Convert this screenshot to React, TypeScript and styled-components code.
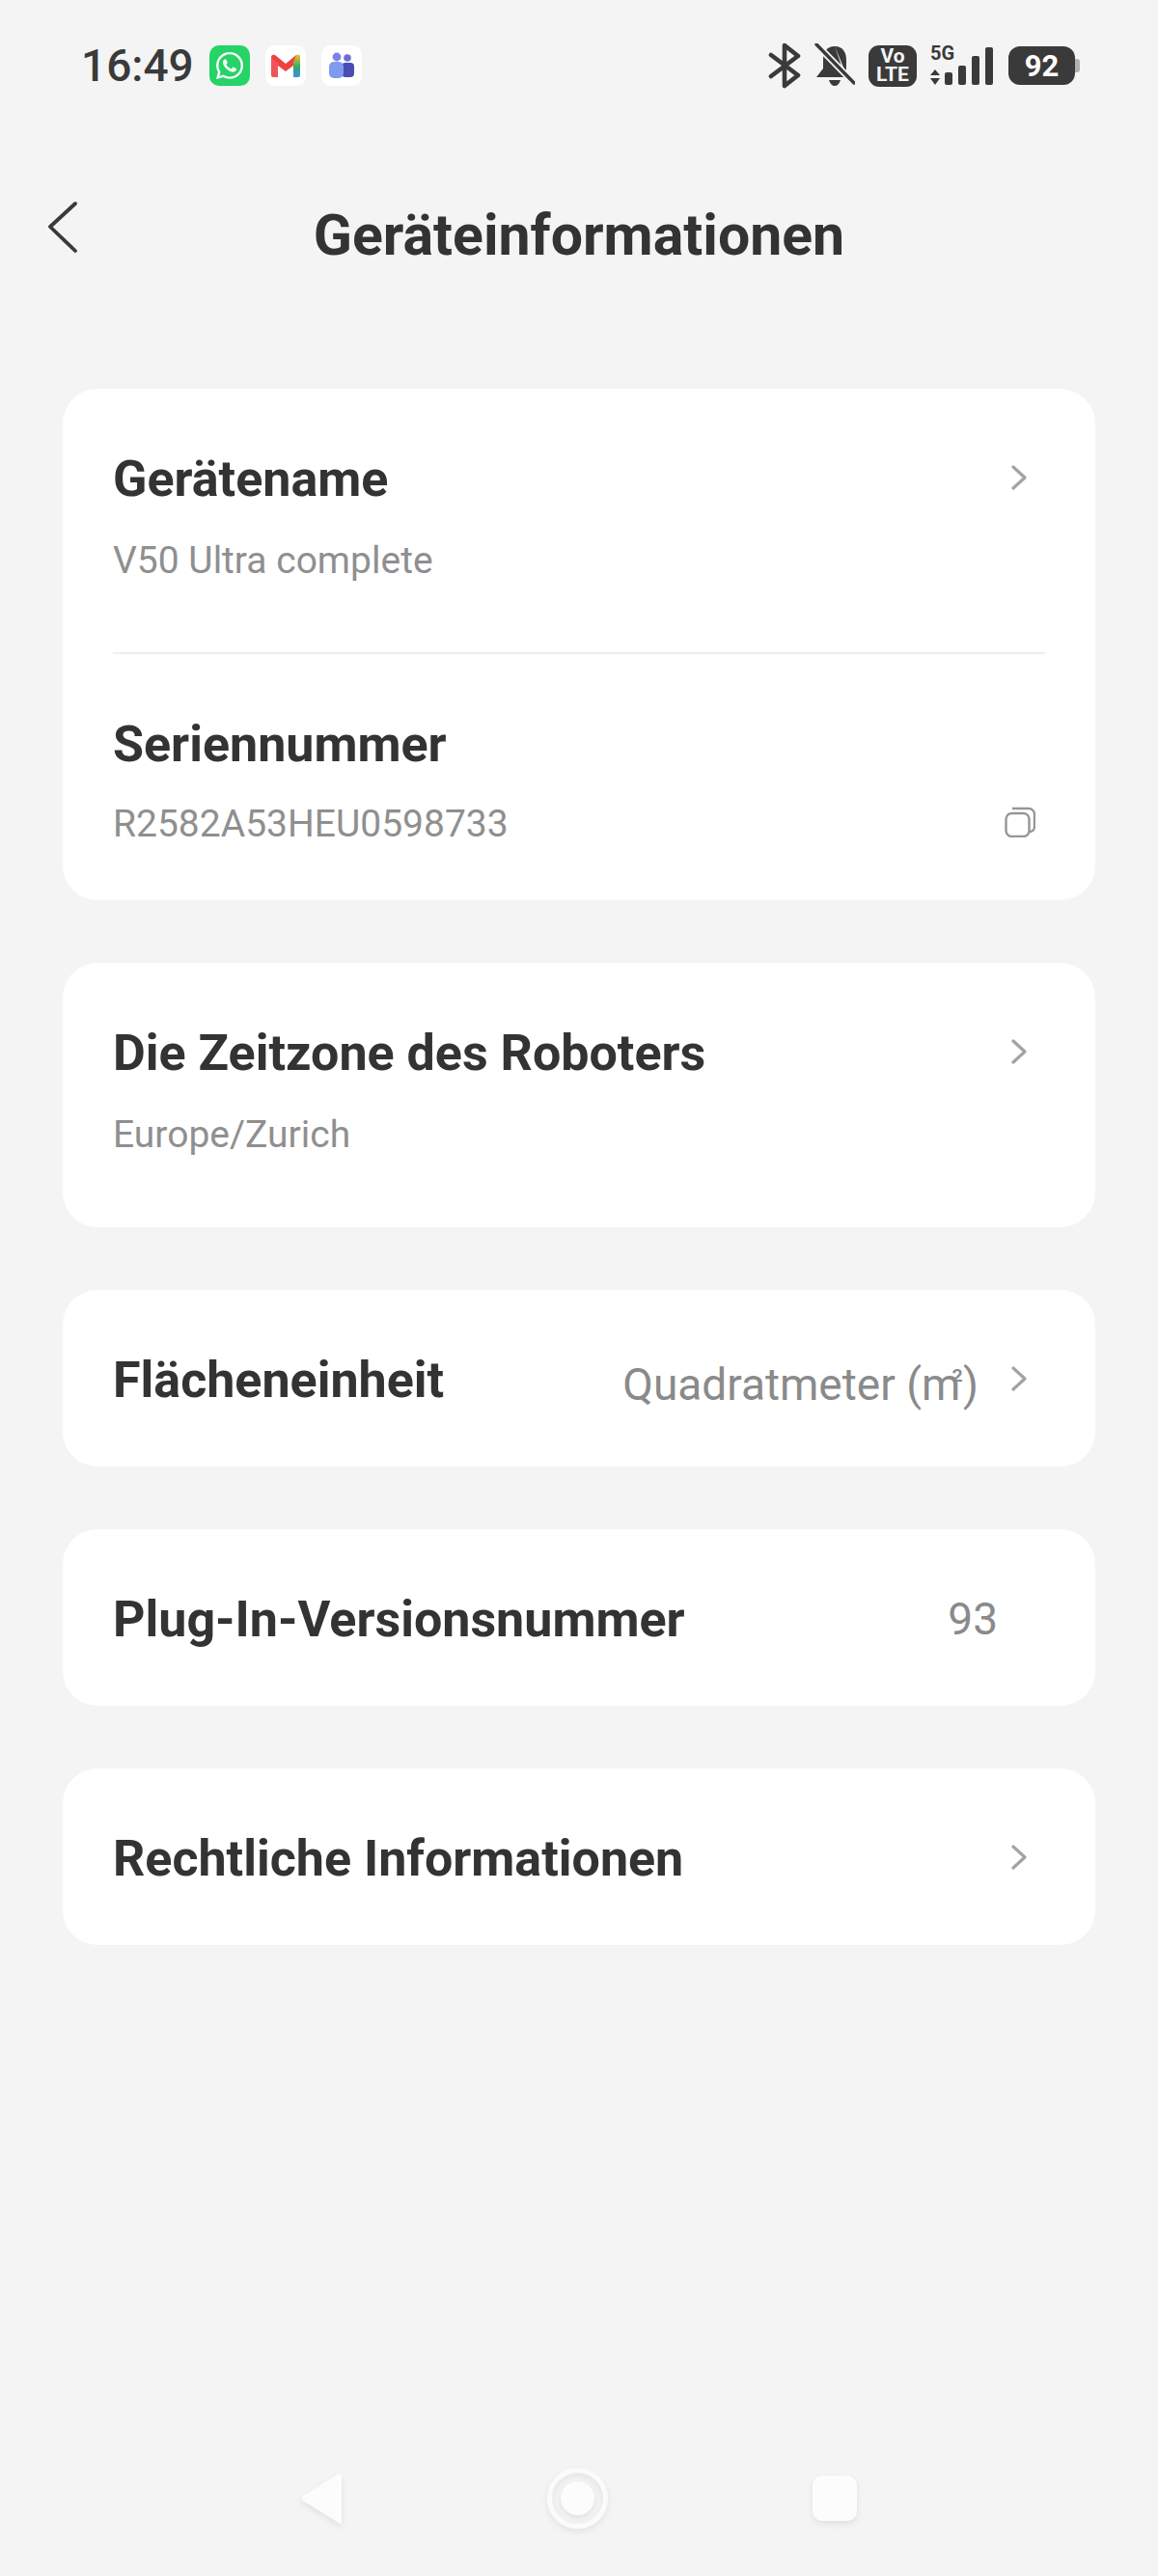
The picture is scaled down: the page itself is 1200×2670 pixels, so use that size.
import React from "react";
import styled, { createGlobalStyle } from "styled-components";
import { FaWhatsapp } from "react-icons/fa";

const Global = createGlobalStyle`
  html, body { margin: 0; padding: 0; background: #f4f4f4; }
  * { box-sizing: border-box; }
`;

const Page = styled.div`
  width: 1200px;
  height: 2670px;
  background: #f4f4f4;
  font-family: Roboto, "Liberation Sans", sans-serif;
  display: flex;
  flex-direction: column;
  overflow: hidden;
`;

const StatusBar = styled.div`
  height: 68px;
  margin-top: 34px;
  padding: 0 86px 0 84px;
  display: flex;
  align-items: center;
  justify-content: space-between;
`;

const StatusGroup = styled.div<{ $gap: number }>`
  display: flex;
  align-items: center;
  gap: ${(p) => p.$gap}px;
`;

const Clock = styled.span`
  font-size: 46px;
  font-weight: 500;
  color: #3a3a3a;
`;

const AppBadge = styled.span<{ $bg: string }>`
  width: 42px;
  height: 42px;
  border-radius: 10px;
  background: ${(p) => p.$bg};
  display: flex;
  align-items: center;
  justify-content: center;
  color: #fff;
`;

const Header = styled.div`
  height: 120px;
  margin-top: 81px;
  position: relative;
  display: flex;
  align-items: center;
  justify-content: center;
`;

const BackButton = styled.span`
  position: absolute;
  left: 49px;
  top: 25px;
  display: flex;
`;

const Title = styled.h1`
  margin: 0;
  font-size: 59px;
  font-weight: 700;
  color: #333;
`;

const Cards = styled.div`
  margin-top: 100px;
  padding: 0 65px;
  display: flex;
  flex-direction: column;
  gap: 65px;
`;

const Card = styled.section`
  background: #fff;
  border-radius: 36px;
  padding: 0 52px;
`;

const StackRow = styled.div<{ $height: number; $divided?: boolean }>`
  height: ${(p) => p.$height}px;
  display: flex;
  flex-direction: column;
  border-bottom: ${(p) => (p.$divided ? "2px solid #eeeeee" : "none")};
  padding-top: 63px;
`;

const LineRow = styled.div`
  height: 183px;
  padding-top: 3px;
  display: flex;
  align-items: center;
  justify-content: space-between;
`;

const TopLine = styled.div`
  display: flex;
  align-items: center;
  justify-content: space-between;
  height: 60px;
`;

const Label = styled.span`
  font-size: 52px;
  font-weight: 700;
  color: #333;
`;

const Sub = styled.span`
  font-size: 39px;
  color: #8f8f8f;
`;

const SubLine = styled.div<{ $gap: number }>`
  margin-top: ${(p) => p.$gap}px;
  display: flex;
  align-items: center;
  justify-content: space-between;
`;

const Value = styled.span`
  font-size: 46px;
  color: #8a8a8a;
`;

const Lowered = styled(Value)`
  position: relative;
  top: 5px;
  margin-right: 34px;
`;

const Squared = styled.span`
  font-size: 32px;
  position: relative;
  top: -9px;
  margin-left: -9px;
`;

const ValueGroup = styled.div`
  display: flex;
  align-items: center;
`;

const NumberValue = styled(Value)`
  margin-right: 49px;
`;

const ChevronSlot = styled.span`
  display: flex;
  margin-right: 19px;
  margin-bottom: 2px;
`;

const CopySlot = styled.span`
  display: flex;
  margin-right: 10px;
  margin-bottom: 5px;
`;

const NavBar = styled.div`
  margin-top: auto;
  height: 63px;
  margin-bottom: 49px;
  padding: 0 312px;
  display: flex;
  align-items: center;
  justify-content: space-between;
`;

const Chevron = () => (
  <ChevronSlot>
    <svg width="16" height="26" viewBox="0 0 16 26" fill="none" stroke="#a3a3a3" strokeWidth="3.2" strokeLinecap="round" strokeLinejoin="round">
      <path d="M2 2 L14 13 L2 24" />
    </svg>
  </ChevronSlot>
);

const CopyIcon = () => (
  <CopySlot>
    <svg width="32" height="32" viewBox="0 0 32 32" fill="none" stroke="#969696" strokeWidth="2.4">
      <rect x="1.5" y="7" width="24" height="24" rx="6" />
      <path d="M8 2 H25 A6 6 0 0 1 31 8 V21 A5 5 0 0 1 26 26" />
    </svg>
  </CopySlot>
);

const GmailIcon = () => (
  <svg width="32" height="26" viewBox="0 0 32 26">
    <defs>
      <linearGradient id="gmailRight" x1="0" y1="1" x2="0" y2="0">
        <stop offset="0" stopColor="#3f8ee8" />
        <stop offset="0.45" stopColor="#35a86a" />
        <stop offset="1" stopColor="#f5c51f" />
      </linearGradient>
    </defs>
    <path d="M1 5 Q1 1 5 2 L16 11 L27 2 Q31 1 31 5 L24 13 L16 19 L8 13Z" fill="#f0413f" />
    <path d="M1 5 L8 10 V25 H3 Q1 25 1 23Z" fill="#f1545c" />
    <path d="M31 4 V23 Q31 25 29 25 H24 V10 L27 2 Q31 1 31 4Z" fill="url(#gmailRight)" />
  </svg>
);

const TeamsIcon = () => (
  <svg width="28" height="28" viewBox="0 0 28 28">
    <circle cx="9" cy="5" r="4.4" fill="#7b83eb" />
    <circle cx="20" cy="6" r="3.8" fill="#6a6fd6" />
    <rect x="14" y="11" width="13" height="15" rx="4" fill="#4a4db5" />
    <rect x="1" y="10" width="15" height="17" rx="5" fill="#7f9bf0" />
  </svg>
);

const Bluetooth = () => (
  <svg width="34" height="48" viewBox="0 0 34 48" fill="none" stroke="#3a3a3a" strokeWidth="4.6" strokeLinejoin="round" strokeLinecap="round">
    <path d="M3 13 L31 34 L17 45 V3 L31 14 L3 35" />
  </svg>
);

const BellOff = () => (
  <svg width="42" height="46" viewBox="0 0 42 46">
    <path d="M21 3 C12 3 9 10 9 17 V26 L2 35 H32Z M33 32 V17 C33 10 30 3 21 3Z" fill="#3a3a3a" />
    <path d="M15 38 H27 Q25 44 21 44 Q17 44 15 38Z" fill="#3a3a3a" />
    <path d="M2 1 L41 41" stroke="#f4f4f4" strokeWidth="7" />
    <path d="M2 1 L41 41" stroke="#3a3a3a" strokeWidth="3.4" strokeLinecap="round" />
  </svg>
);

const VoLteBox = styled.span`
  width: 50px;
  height: 43px;
  border-radius: 11px;
  background: #3a3a3a;
  color: #f4f4f4;
  font-size: 21px;
  font-weight: 700;
  line-height: 19px;
  text-align: center;
  display: flex;
  flex-direction: column;
  justify-content: center;
`;

const SignalWrap = styled.span`
  position: relative;
  display: flex;
  width: 67px;
  height: 42px;
`;

const FiveG = styled.span`
  position: absolute;
  left: 0;
  top: -3px;
  font-size: 20px;
  font-weight: 700;
  line-height: 22px;
  color: #3a3a3a;
`;

const Signal = () => (
  <svg width="66" height="42" viewBox="0 0 66 42" fill="#3a3a3a">
    <path d="M0 31 L5 25 L10 31Z M0 34 H10 L5 41Z" />
    <rect x="15" y="28" width="8" height="13" rx="2" />
    <rect x="29" y="21" width="8" height="20" rx="2" />
    <rect x="43" y="11" width="8" height="30" rx="2" />
    <rect x="57" y="2" width="8" height="39" rx="2" />
  </svg>
);

const Battery = styled.span`
  position: relative;
  width: 69px;
  height: 40px;
  border-radius: 12px;
  background: #3a3a3a;
  color: #fff;
  font-size: 31px;
  font-weight: 700;
  display: flex;
  align-items: center;
  justify-content: center;
  &::after {
    content: "";
    position: absolute;
    right: -5px;
    top: 13px;
    width: 5px;
    height: 14px;
    border-radius: 0 3px 3px 0;
    background: #b0b0b0;
  }
`;

const NavGlyph = styled.svg`
  filter: drop-shadow(0 3px 3px rgba(0, 0, 0, 0.08));
`;

export default function App() {
  return (
    <Page>
      <Global />
      <StatusBar>
        <StatusGroup $gap={16}>
          <Clock>16:49</Clock>
          <AppBadge $bg="#25d366"><FaWhatsapp size={32} /></AppBadge>
          <AppBadge $bg="#ffffff"><GmailIcon /></AppBadge>
          <AppBadge $bg="#ffffff"><TeamsIcon /></AppBadge>
        </StatusGroup>
        <StatusGroup $gap={14}>
          <Bluetooth />
          <BellOff />
          <VoLteBox><span>Vo</span><span>LTE</span></VoLteBox>
          <SignalWrap><Signal /><FiveG>5G</FiveG></SignalWrap>
          <Battery>92</Battery>
        </StatusGroup>
      </StatusBar>
      <Header>
        <BackButton>
          <svg width="32" height="56" viewBox="0 0 32 56" fill="none" stroke="#3a3a3a" strokeWidth="3.8" strokeLinecap="round" strokeLinejoin="round">
            <path d="M29 3 L3 27 L29 52" />
          </svg>
        </BackButton>
        <Title>Geräteinformationen</Title>
      </Header>
      <Cards>
        <Card>
          <StackRow $height={275} $divided>
            <TopLine><Label>Gerätename</Label><Chevron /></TopLine>
            <SubLine $gap={32}><Sub>V50 Ultra complete</Sub></SubLine>
          </StackRow>
          <StackRow $height={255}>
            <TopLine><Label>Seriennummer</Label></TopLine>
            <SubLine $gap={30}><Sub>R2582A53HEU0598733</Sub><CopyIcon /></SubLine>
          </StackRow>
        </Card>
        <Card>
          <StackRow $height={274}>
            <TopLine><Label>Die Zeitzone des Roboters</Label><Chevron /></TopLine>
            <SubLine $gap={32}><Sub>Europe/Zurich</Sub></SubLine>
          </StackRow>
        </Card>
        <Card>
          <LineRow>
            <Label>Flächeneinheit</Label>
            <ValueGroup><Lowered>Quadratmeter (m<Squared>²</Squared>)</Lowered><Chevron /></ValueGroup>
          </LineRow>
        </Card>
        <Card>
          <LineRow>
            <Label>Plug-In-Versionsnummer</Label>
            <NumberValue>93</NumberValue>
          </LineRow>
        </Card>
        <Card>
          <LineRow>
            <Label>Rechtliche Informationen</Label>
            <Chevron />
          </LineRow>
        </Card>
      </Cards>
      <NavBar>
        <NavGlyph width="43" height="53" viewBox="0 0 43 53">
          <path d="M39 1 Q42 0 42 3 V50 Q42 53 39 52 L2 29 Q0 26.5 2 24Z" fill="#fcfcfc" />
        </NavGlyph>
        <NavGlyph width="63" height="63" viewBox="0 0 63 63">
          <circle cx="31.5" cy="31.5" r="29" fill="none" stroke="#fbfbfb" strokeWidth="5" />
          <circle cx="31.5" cy="31.5" r="17.5" fill="#fcfcfc" />
        </NavGlyph>
        <NavGlyph width="46" height="47" viewBox="0 0 46 47">
          <rect x="0" y="0" width="46" height="47" rx="10" fill="#fcfcfc" />
        </NavGlyph>
      </NavBar>
    </Page>
  );
}
